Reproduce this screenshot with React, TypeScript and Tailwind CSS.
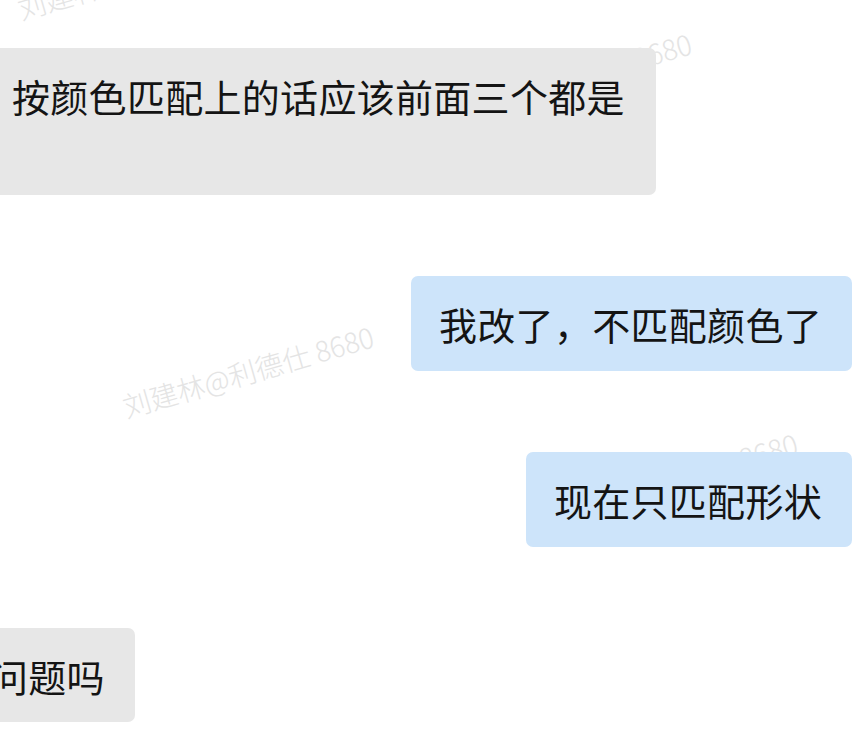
import React from "react";

type Msg = { text: string; mine: boolean };

const messages: Msg[] = [
  { text: "按颜色匹配上的话应该前面三个都是", mine: false },
  { text: "我改了，不匹配颜色了", mine: true },
  { text: "现在只匹配形状", mine: true },
  { text: "问题吗", mine: false },
];

const fontStack = '"PingFang SC", "Noto Sans CJK SC", "Noto Sans", sans-serif';

// tiled user watermark, sits under the message list
const Watermarks: React.FC = () => {
  const label = "刘建林@利德仕 8680";
  const cls =
    "absolute whitespace-nowrap text-[28px] leading-[28px] font-light text-[#e4e4e4] origin-bottom-left -rotate-[16deg] select-none";
  return (
    <div className="pointer-events-none absolute inset-0">
      <span className={`${cls} left-[22px] top-[-6px]`}>{label}</span>
      <span className={`${cls} left-[127px] top-[392px]`}>{label}</span>
      <span className={`${cls} left-[445px] top-[99px]`}>{label}</span>
      <span className={`${cls} left-[551px] top-[499px]`}>{label}</span>
    </div>
  );
};

const bubbleText = "py-[22px] text-[38px] leading-[51px] tracking-[0.3px] text-[#141414] rounded-[7px]";

const Bubble: React.FC<{ msg: Msg; index: number }> = ({ msg, index }) => {
  if (msg.mine) {
    return (
      <div className="flex justify-end pr-[4px]">
        <div className={`${bubbleText} bg-[#cde4fa] pl-[28px] pr-[30px]`}>{msg.text}</div>
      </div>
    );
  }
  // incoming bubbles run off the left edge
  return (
    <div className="flex justify-start">
      <div
        className={
          index === 0
            ? `${bubbleText} -ml-[16px] h-[147px] bg-[#e7e7e7] pl-[28px] pr-[31px]`
            : `${bubbleText} -ml-[38px] h-[94px] bg-[#e7e7e7] pl-[28px] pr-[30px]`
        }
      >
        {msg.text}
      </div>
    </div>
  );
};

export default function App() {
  return (
    <div
      className="relative h-[730px] w-[856px] overflow-hidden bg-white"
      style={{ fontFamily: fontStack }}
    >
      <Watermarks />
      <div className="relative flex flex-col gap-[81px] pt-[48px]">
        {messages.map((m, i) => (
          <Bubble key={i} msg={m} index={i} />
        ))}
      </div>
    </div>
  );
}
